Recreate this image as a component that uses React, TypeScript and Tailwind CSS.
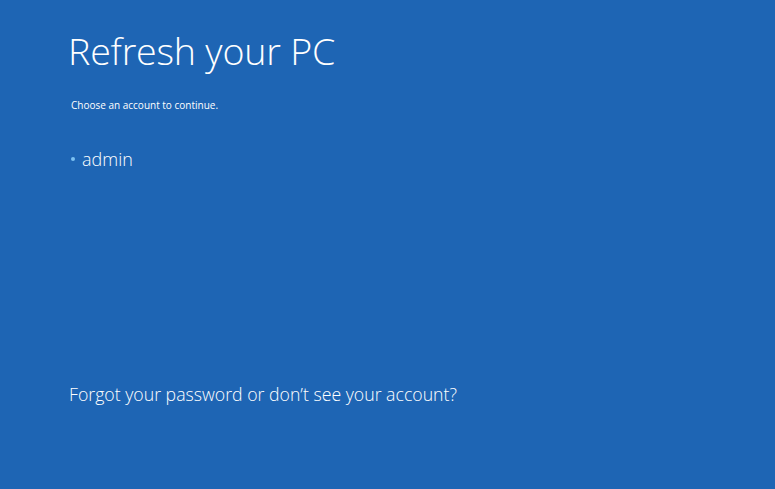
import React from "react";

const App: React.FC = () => {
  return (
    <div
      className="w-[775px] h-[489px] bg-[#1e65b4] text-white flex flex-col pl-[68px] overflow-hidden"
      style={{ fontFamily: '"Open Sans", "Noto Sans", sans-serif' }}
    >
      <h1 className="mt-[26px] text-[37.6px] leading-[50px] font-light tracking-[-0.2px]">
        Refresh your PC
      </h1>
      <p className="mt-[22px] ml-[3px] text-[10px] leading-[14px]">
        Choose an account to continue.
      </p>
      <ul className="mt-[34px] ml-[3px]">
        <li className="flex items-center text-[18px] leading-[26px] font-light">
          <span className="w-[4px] h-[4px] rounded-full bg-[#7cc2f2] mr-[7px]" />
          admin
        </li>
      </ul>
      <p className="mt-[209px] ml-[1px] text-[17.7px] leading-[26px] font-light">
        Forgot your password or don’t see your account?
      </p>
    </div>
  );
};

export default App;
